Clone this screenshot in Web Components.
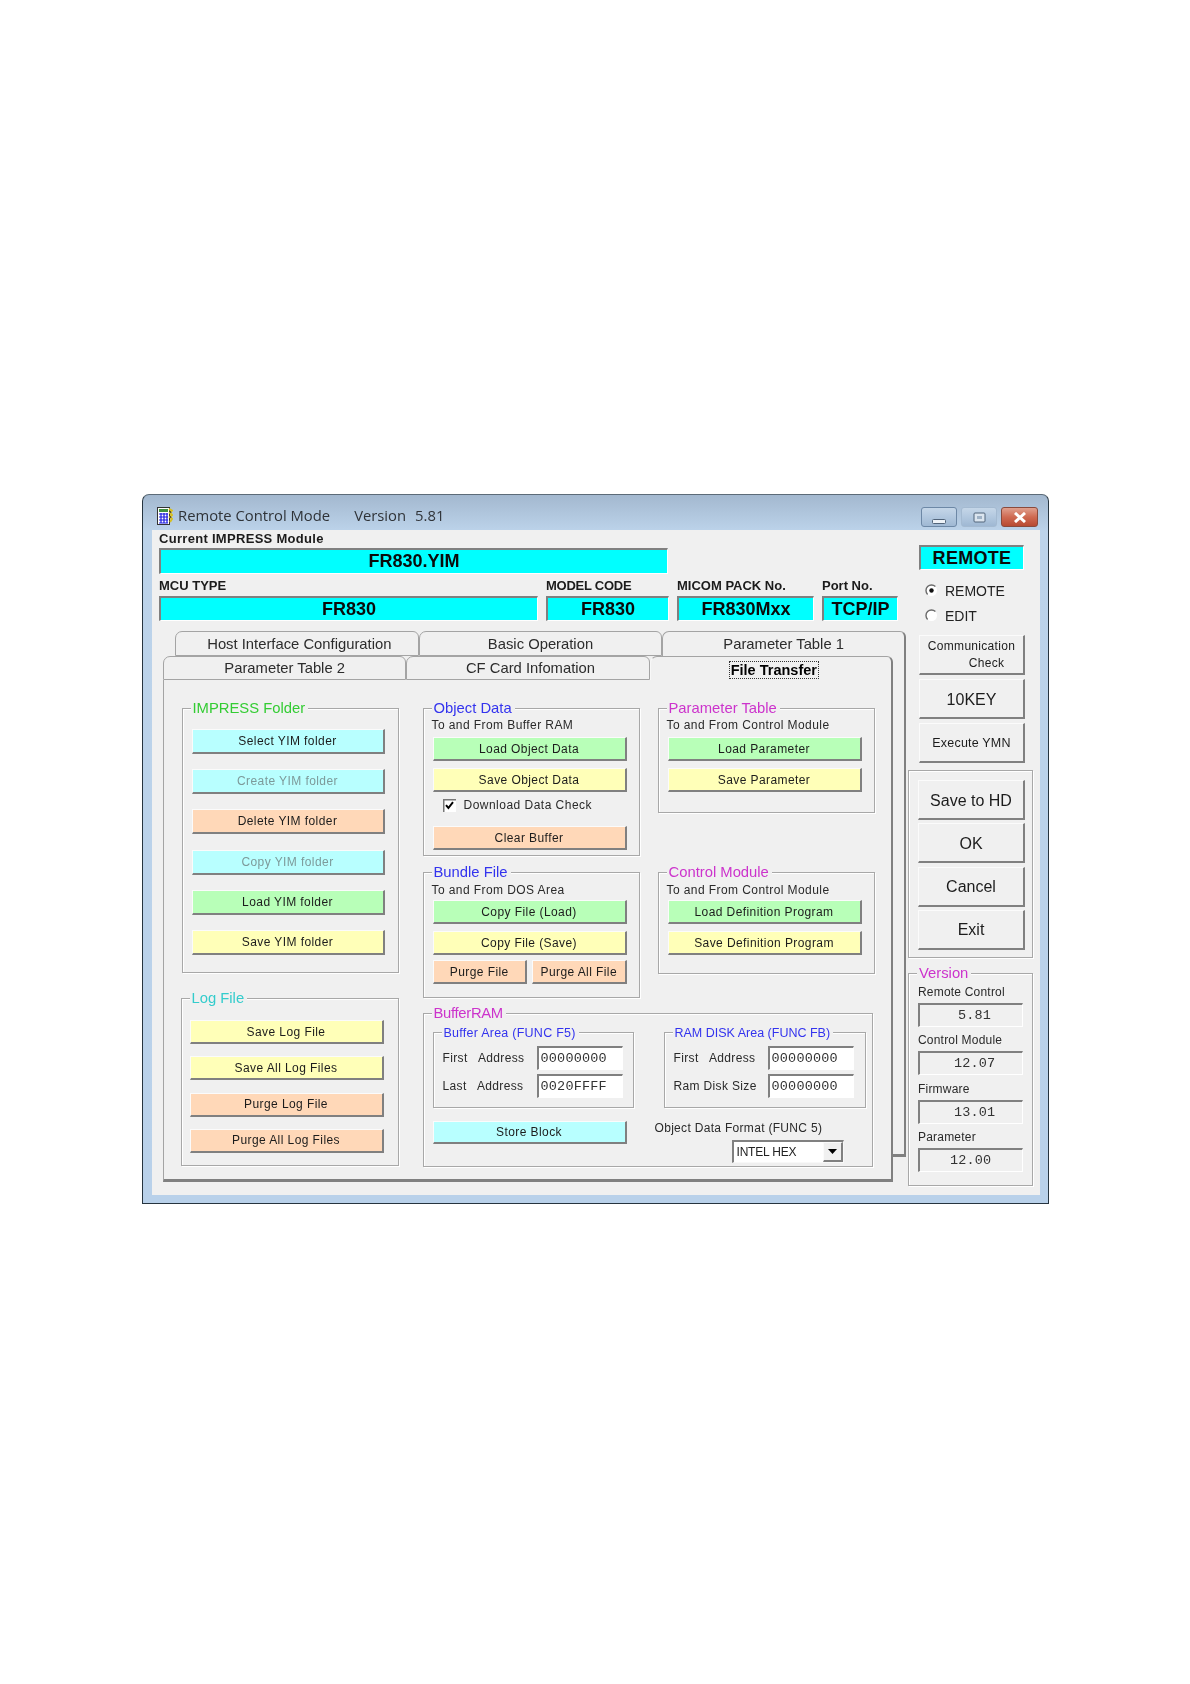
<!DOCTYPE html>
<html lang="en">
<head>
<meta charset="utf-8">
<title>Remote Control Mode</title>
<style>
	html, body {
		margin: 0;
		background: #fff;
	}
	body {
		box-sizing: border-box;
		height: 1684px;
		padding: 494px 0 0 142px;
		overflow: hidden;
		font-family: "Liberation Sans", Arial, sans-serif;
	}
</style>
</head>
<body>
<remote-app></remote-app>
<script>
'use strict'

// raised push button, tone picks the face colour
class RcButton extends HTMLElement {
	static define(tag = 'rc-button') {
		customElements.define(tag, this)
	}

	constructor() {
		super()
		const shadowroot = this.attachShadow({ mode: 'open' })
		shadowroot.innerHTML = `
			<style>
				:host {
					display: flex;
					align-items: center;
					justify-content: center;
					box-sizing: border-box;
					height: 24px;
					padding-top: 1px;
					background: #f0f0f0;
					border-style: solid;
					border-width: 1px 2px 2px 1px;
					border-color: #fbfbfb #808080 #808080 #fbfbfb;
					color: #1c1c1c;
					font-size: 12px;
					letter-spacing: .42px;
					text-align: center;
					line-height: 17px;
				}
				:host([tone="cyan"]) { background: #b8ffff; }
				:host([tone="green"]) { background: #b8ffb8; }
				:host([tone="yellow"]) { background: #ffffb8; }
				:host([tone="orange"]) { background: #ffd8b8; }
				:host([disabled]) { color: #7d9a9a; }
				div { width: 100%; }
			</style>
			<div><slot></slot></div>`
	}
}

// etched frame with a coloured caption sitting on its top line
class RcGroup extends HTMLElement {
	static define(tag = 'rc-group') {
		customElements.define(tag, this)
	}

	constructor() {
		super()
		const shadowroot = this.attachShadow({ mode: 'open' })
		shadowroot.innerHTML = `
			<style>
				:host {
					display: block;
					box-sizing: border-box;
					border: 1px solid #a8a8a8;
					box-shadow: 1px 1px 0 #fff, inset 1px 1px 0 #fff;
				}
				:host([plain]) .title { visibility: hidden; }
				.title {
					width: fit-content;
					height: 16px;
					margin: -9px 0 0 8px;
					padding: 0 3px 0 2px;
					background: #f0f0f0;
					font-size: 14.8px;
					line-height: 16px;
					white-space: nowrap;
				}
			</style>
			<div class="title" part="title"><slot name="title"></slot></div>
			<slot></slot>`
	}
}

// sunken box, cyan for the read outs, white for the inputs
class RcField extends HTMLElement {
	static define(tag = 'rc-field') {
		customElements.define(tag, this)
	}

	constructor() {
		super()
		const shadowroot = this.attachShadow({ mode: 'open' })
		shadowroot.innerHTML = `
			<style>
				:host {
					display: flex;
					align-items: center;
					box-sizing: border-box;
					height: 25px;
					border-style: solid;
					border-width: 2px 1px 1px 2px;
					border-color: #808080 #fff #fff #808080;
					background: #f0f0f0;
					color: #333;
					font-family: "Liberation Mono", monospace;
					font-size: 13.5px;
					white-space: pre;
				}
				:host([tone="cyan"]) {
					justify-content: center;
					background: #00ffff;
					color: #0a0a0a;
					font-family: "Liberation Sans", Arial, sans-serif;
					font-size: 18px;
					font-weight: bold;
				}
				:host([tone="white"]) {
					background: #fff;
					padding-left: 2px;
					letter-spacing: .2px;
				}
			</style>
			<slot></slot>`
	}
}

class RcRadio extends HTMLElement {
	static define(tag = 'rc-radio') {
		customElements.define(tag, this)
	}

	constructor() {
		super()
		const shadowroot = this.attachShadow({ mode: 'open' })
		shadowroot.innerHTML = `
			<style>
				:host {
					display: flex;
					align-items: center;
					gap: 7px;
					height: 25px;
					color: #222;
					font-size: 14px;
				}
				svg { display: block; }
				.dot { display: none; }
				:host([checked]) .dot { display: inline; }
			</style>
			<svg width="13" height="13" viewBox="0 0 13 13">
				<circle cx="6.5" cy="6.5" r="5.5" fill="#fff"/>
				<path d="M2.6 10.4A5.5 5.5 0 0 1 10.4 2.6" fill="none" stroke="#6a6a6a" stroke-width="1.4"/>
				<circle class="dot" cx="6.5" cy="6.5" r="2.2" fill="#111"/>
			</svg>
			<slot></slot>`
	}
}

class RcCheck extends HTMLElement {
	static define(tag = 'rc-check') {
		customElements.define(tag, this)
	}

	constructor() {
		super()
		const shadowroot = this.attachShadow({ mode: 'open' })
		shadowroot.innerHTML = `
			<style>
				:host {
					display: flex;
					align-items: center;
					gap: 8px;
					height: 14px;
					color: #2a2a2a;
					font-size: 12px;
					letter-spacing: .48px;
				}
				svg { display: block; }
			</style>
			<svg width="13" height="13" viewBox="0 0 13 13">
				<rect width="13" height="13" fill="#fff"/>
				<path d="M.75 13V.75H13" fill="none" stroke="#777" stroke-width="1.5"/>
				<path d="M3 6.2 5.4 9 10 3.2" fill="none" stroke="#000" stroke-width="2"/>
			</svg>
			<slot></slot>`
	}
}

class RcCombo extends HTMLElement {
	static define(tag = 'rc-combo') {
		customElements.define(tag, this)
	}

	constructor() {
		super()
		const shadowroot = this.attachShadow({ mode: 'open' })
		shadowroot.innerHTML = `
			<style>
				:host {
					display: flex;
					box-sizing: border-box;
					height: 23px;
					border-style: solid;
					border-width: 2px 1px 1px 2px;
					border-color: #808080 #f8f8f8 #f8f8f8 #808080;
					background: #fff;
					color: #222;
					font-size: 12px;
					letter-spacing: -.2px;
				}
				.text {
					flex: 1;
					display: flex;
					align-items: center;
					padding-left: 3px;
				}
				.arrow {
					display: flex;
					align-items: center;
					justify-content: center;
					box-sizing: border-box;
					width: 20px;
					border-style: solid;
					border-width: 1px 2px 2px 1px;
					border-color: #fbfbfb #808080 #808080 #fbfbfb;
					background: #f0f0f0;
				}
			</style>
			<div class="text"><slot></slot></div>
			<div class="arrow">
				<svg width="9" height="5" viewBox="0 0 9 5"><path d="M0 0H9L4.5 5Z" fill="#000"/></svg>
			</div>`
	}
}

class RcTab extends HTMLElement {
	static define(tag = 'rc-tab') {
		customElements.define(tag, this)
	}

	constructor() {
		super()
		const shadowroot = this.attachShadow({ mode: 'open' })
		shadowroot.innerHTML = `
			<style>
				:host {
					display: flex;
					flex: 0 0 33.333%;
					align-items: center;
					justify-content: center;
					box-sizing: border-box;
					border-style: solid;
					border-width: 1.5px;
					border-color: #a4a4a4;
					border-radius: 7px 6px 0 0;
					background: #f0f0f0;
					color: #2c2c2c;
					font-size: 14.8px;
				}
				:host([back]) {
					border-bottom: 0;
					border-right-width: 2px;
					border-right-color: #808080;
				}
				:host([selected]) {
					border-bottom: 0;
					border-left-color: #f8f8f8;
					border-right-width: 2px;
					border-right-color: #808080;
					color: #000;
					font-weight: bold;
					font-size: 14.5px;
					padding: 2px 0 0 6px;
				}
				:host([selected]) span {
					padding: 0 1px;
					outline: 1px dotted #333;
				}
			</style>
			<span><slot></slot></span>`
	}
}

class RcWindow extends HTMLElement {
	static define(tag = 'rc-window') {
		customElements.define(tag, this)
	}

	constructor() {
		super()
		const shadowroot = this.attachShadow({ mode: 'open' })
		shadowroot.innerHTML = `
			<style>
				:host {
					display: block;
					box-sizing: border-box;
					width: 907px;
					height: 710px;
					border: 1px solid #26343f;
					border-color: #5c6b78 #26343f #26343f #26343f;
					border-radius: 7px 7px 0 0;
					background: linear-gradient(#a3b8cf, #bcd3ea 36px, #b9d1ea);
					filter: blur(.35px);
				}
				.bar {
					display: flex;
					align-items: flex-start;
					box-sizing: border-box;
					height: 35px;
					padding: 12px 10px 0 14px;
				}
				.icon { display: block; margin-right: 5px; }
				.caption {
					flex: 1;
					height: 19px;
					margin-top: -1px;
					color: #2f3338;
					font-family: "Open Sans", sans-serif;
					font-size: 14.8px;
					line-height: 19px;
					white-space: nowrap;
				}
				.caption span { margin-left: 24px; }
				.caption span + span { margin-left: 9px; }
				.controls { display: flex; gap: 4px; }
				.ctl {
					display: flex;
					align-items: center;
					justify-content: center;
					box-sizing: border-box;
					width: 36px;
					height: 20px;
					border: 1px solid #6d88a6;
					border-radius: 3px;
					background: linear-gradient(#c5d6e8, #b2c8df 50%, #9fb8d3);
				}
				.ctl.min { align-items: flex-end; padding-bottom: 1px; }
				.ctl.max { border-color: #a4bad1; }
				.ctl.close {
					width: 37px;
					border-color: #8a4a3c;
					background: linear-gradient(#e0a08e, #cf6a52 50%, #b84a32);
				}
				.client {
					box-sizing: border-box;
					height: 665px;
					margin: 0 8px 0 9px;
					background: #f0f0f0;
				}
			</style>
			<div class="bar">
				<svg class="icon" width="16" height="18" viewBox="0 0 16 18">
					<rect x=".5" y=".5" width="12" height="17" fill="#fff" stroke="#333"/>
					<rect x="2" y="2" width="9" height="3" fill="#3f8f3f"/>
					<path d="M2 7H11M2 10H11M2 13H11M2 16H11M4 6V16.5M7 6V16.5M10 6V16.5" stroke="#1a1ae0" stroke-width="1.2" fill="none"/>
					<path d="M12 2 15 3.5 13 6 15 8 13 10 15 12 13 15" stroke="#d8c020" stroke-width="2" fill="none"/>
					<path d="M13 4 14 6M13 9 14 11" stroke="#333" fill="none"/>
				</svg>
				<div class="caption">Remote Control Mode<span>Version</span><span>5.81</span></div>
				<div class="controls">
					<div class="ctl min">
						<svg width="15" height="7" viewBox="0 0 15 7"><rect x=".5" y="1.5" width="13" height="4" rx="1" fill="#eef3f8" stroke="#51647a"/></svg>
					</div>
					<div class="ctl max">
						<svg width="13" height="11" viewBox="0 0 13 11"><rect x="1" y="1" width="11" height="9" rx="1" fill="#dbe5ef" stroke="#51647a"/><rect x="4" y="4" width="5" height="3" fill="#9fb2c6"/></svg>
					</div>
					<div class="ctl close">
						<svg width="14" height="11" viewBox="0 0 14 11"><path d="M2 1 12 10M12 1 2 10" stroke="#fff" stroke-width="3" fill="none"/></svg>
					</div>
				</div>
			</div>
			<div class="client"><slot></slot></div>`
	}
}

class RemoteApp extends HTMLElement {
	static define(tag = 'remote-app') {
		customElements.define(tag, this)
	}

	constructor() {
		super()
		const shadowroot = this.attachShadow({ mode: 'open' })
		shadowroot.innerHTML = `
			<style>
				:host {
					display: block;
					font-family: "Liberation Sans", Arial, sans-serif;
				}
				.layout {
					display: grid;
					grid-template-columns: 754px 125px;
					column-gap: 2px;
				}
				.main { padding-left: 7px; }
				.side { display: flex; flex-direction: column; }
				.head {
					height: 18px;
					box-sizing: border-box;
					color: #1b1b1b;
					font-size: 13px;
					font-weight: bold;
					line-height: 17px;
				}
				.head.wide { letter-spacing: .3px; }
				.head.tight { letter-spacing: -.25px; }
				.module { width: 509px; height: 26px; }
				.heads {
					display: grid;
					grid-template-columns: 379px 123px 137px 76px;
					column-gap: 8px;
					margin-top: 3px;
				}
				.heads rc-field { height: 25px; margin-top: 1px; }
				.heads .row2 { grid-row: 2; }

				/* tab control: two rows of tabs over the sheet, stub is the sheet behind */
				.tabs {
					display: grid;
					grid-template-columns: 730px 13px;
					grid-template-rows: 25px 24px 477px 25px;
					margin: 10px 0 0 4px;
				}
				.tabrow { display: flex; }
				.tabrow.first { grid-column: 1 / 3; grid-row: 1; padding-left: 12px; }
				.tabrow.second { grid-column: 1; grid-row: 2; }
				.nudge { padding-left: 5px; }
				.stub {
					grid-column: 2;
					grid-row: 2 / 4;
					box-sizing: border-box;
					border-right: 2px solid #808080;
					border-bottom: 3px solid #808080;
				}
				.sheet {
					grid-column: 1;
					grid-row: 3 / 5;
					display: flex;
					gap: 24px;
					box-sizing: border-box;
					padding: 28px 0 0 17.5px;
					border-style: solid;
					border-width: 0 2px 3px 1.5px;
					border-color: #808080 #808080 #808080 #a4a4a4;
				}
				.sheet-left { display: flex; flex-direction: column; width: 217px; }
				.sheet-right {
					display: grid;
					grid-template-columns: 217px 217px;
					grid-template-rows: 164px 141px 154px;
					column-gap: 18px;
				}
				.sheet-right > rc-group { align-self: start; }
				.impress { height: 265px; }
				.logfile { height: 168px; margin: 25px 0 0 -1px; }
				.stack { display: flex; flex-direction: column; }
				.impress .stack { gap: 15.2px; margin: 13px 0 0 9px; width: 193px; }
				.impress rc-button { height: 25px; }
				.logfile .stack { gap: 12.3px; margin: 14px 0 0 8px; width: 194px; }
				.green-t { color: #33cc33; }
				.aqua-t { color: #33cccc; }
				.blue-t { color: #3333ee; }
				.pink-t { color: #cc33cc; }
				.sub {
					height: 14px;
					margin: 2px 0 0 8px;
					color: #2a2a2a;
					font-size: 12px;
					letter-spacing: .42px;
					line-height: 14px;
				}
				.data .stack { margin: 5px 0 0 9px; width: 194px; }
				.data .stack > rc-button + rc-button { margin-top: 7px; }
				.data.bundle .stack, .data.control .stack { margin-top: 3px; }
				.data.bundle .sub, .data.control .sub { margin-top: 3px; }
				.data.object { height: 148px; }
				.data.param { height: 105px; }
				.data.bundle { height: 126px; }
				.data.control { height: 102px; }
				rc-check { margin: 6px 0 14px 10px; }
				.pair { display: flex; gap: 5px; margin-top: 5px; }
				.pair rc-button { flex: 1; }

				.buffer { grid-column: 1 / 3; width: 450px; height: 154px; }
				.buffer > [slot="title"] { letter-spacing: -.3px; }
				.areas { display: flex; gap: 30px; margin: 11px 0 0 9px; }
				.area { width: 201px; height: 76px; }
				.area + .area { width: 202px; }
				.area [slot="title"] { font-size: 12.5px; }
				.area.first [slot="title"] { letter-spacing: .25px; }
				.rows { display: flex; flex-direction: column; gap: 4px; margin: 6px 0 0 9px; }
				.row { display: flex; align-items: center; }
				.row span {
					width: 94px;
					color: #2a2a2a;
					font-size: 12px;
					letter-spacing: .35px;
					white-space: pre;
				}
				.row rc-field { width: 86px; height: 24px; }
				.bottom { display: flex; gap: 28px; margin: 13px 0 0 9px; }
				.bottom > rc-button { width: 194px; height: 23px; }
				.format { color: #2a2a2a; font-size: 12px; line-height: 14px; letter-spacing: .31px; }
				.format rc-combo { width: 112px; margin: 5px 0 0 77px; }

				/* right hand column */
				.state { width: 105px; height: 25px; margin: 15px 0 0 11px; letter-spacing: .3px; }
				.radios { margin: 8px 0 0 17px; }
				.cmds { display: flex; flex-direction: column; gap: 4px; width: 106px; margin: 7px 0 0 11px; }
				.cmds rc-button { height: 40px; }
				.comm { font-size: 12px; line-height: 17px; letter-spacing: .3px; }
				.comm span { display: block; padding-left: 30px; }
				.big { font-size: 16px; letter-spacing: 0; }
				.mid { font-size: 12.5px; letter-spacing: .2px; }
				.exits { height: 188px; margin-top: 7px; }
				.exits .stack { gap: 3.3px; width: 107px; margin: 2px 0 0 9px; }
				.exits rc-button { height: 40px; }
				.version { height: 213px; margin-top: 15px; }
				.version .body { display: flex; flex-direction: column; margin: 4px 0 0 9px; width: 105px; }
				.vlabel {
					height: 15px;
					margin-bottom: 3px;
					color: #2a2a2a;
					font-size: 12px;
					letter-spacing: .2px;
					line-height: 15px;
				}
				.version rc-field { height: 24px; margin-bottom: 6.3px; letter-spacing: .15px; }
			</style>
			<rc-window>
				<div class="layout">
					<div class="main">
						<div class="head wide">Current IMPRESS Module</div>
						<rc-field tone="cyan" class="module">FR830.YIM</rc-field>
						<div class="heads">
							<div class="head">MCU TYPE</div>
							<div class="head tight">MODEL CODE</div>
							<div class="head">MICOM PACK No.</div>
							<div class="head">Port No.</div>
							<rc-field tone="cyan" class="row2">FR830</rc-field>
							<rc-field tone="cyan" class="row2">FR830</rc-field>
							<rc-field tone="cyan" class="row2">FR830Mxx</rc-field>
							<rc-field tone="cyan" class="row2">TCP/IP</rc-field>
						</div>
						<div class="tabs">
							<div class="tabrow first">
								<rc-tab class="nudge">Host Interface Configuration</rc-tab>
								<rc-tab>Basic Operation</rc-tab>
								<rc-tab back>Parameter Table 1</rc-tab>
							</div>
							<div class="tabrow second">
								<rc-tab>Parameter Table 2</rc-tab>
								<rc-tab class="nudge">CF Card Infomation</rc-tab>
								<rc-tab selected>File Transfer</rc-tab>
							</div>
							<div class="stub"></div>
							<div class="sheet">
								<div class="sheet-left">
									<rc-group class="impress">
										<span slot="title" class="green-t">IMPRESS Folder</span>
										<div class="stack">
											<rc-button tone="cyan">Select YIM folder</rc-button>
											<rc-button tone="cyan" disabled>Create YIM folder</rc-button>
											<rc-button tone="orange">Delete YIM folder</rc-button>
											<rc-button tone="cyan" disabled>Copy YIM folder</rc-button>
											<rc-button tone="green">Load YIM folder</rc-button>
											<rc-button tone="yellow">Save YIM folder</rc-button>
										</div>
									</rc-group>
									<rc-group class="logfile">
										<span slot="title" class="aqua-t">Log File</span>
										<div class="stack">
											<rc-button tone="yellow">Save Log File</rc-button>
											<rc-button tone="yellow">Save All Log Files</rc-button>
											<rc-button tone="orange">Purge Log File</rc-button>
											<rc-button tone="orange">Purge All Log Files</rc-button>
										</div>
									</rc-group>
								</div>
								<div class="sheet-right">
									<rc-group class="data object">
										<span slot="title" class="blue-t">Object Data</span>
										<div class="sub">To and From Buffer RAM</div>
										<div class="stack">
											<rc-button tone="green">Load Object Data</rc-button>
											<rc-button tone="yellow">Save Object Data</rc-button>
											<rc-check>Download Data Check</rc-check>
											<rc-button tone="orange">Clear Buffer</rc-button>
										</div>
									</rc-group>
									<rc-group class="data param">
										<span slot="title" class="pink-t">Parameter Table</span>
										<div class="sub">To and From Control Module</div>
										<div class="stack">
											<rc-button tone="green">Load Parameter</rc-button>
											<rc-button tone="yellow">Save Parameter</rc-button>
										</div>
									</rc-group>
									<rc-group class="data bundle">
										<span slot="title" class="blue-t">Bundle File</span>
										<div class="sub">To and From DOS Area</div>
										<div class="stack">
											<rc-button tone="green">Copy File (Load)</rc-button>
											<rc-button tone="yellow">Copy File (Save)</rc-button>
											<div class="pair">
												<rc-button tone="orange">Purge File</rc-button>
												<rc-button tone="orange">Purge All File</rc-button>
											</div>
										</div>
									</rc-group>
									<rc-group class="data control">
										<span slot="title" class="pink-t">Control Module</span>
										<div class="sub">To and From Control Module</div>
										<div class="stack">
											<rc-button tone="green">Load Definition Program</rc-button>
											<rc-button tone="yellow">Save Definition Program</rc-button>
										</div>
									</rc-group>
									<rc-group class="buffer">
										<span slot="title" class="pink-t">BufferRAM</span>
										<div class="areas">
											<rc-group class="area first">
												<span slot="title" class="blue-t">Buffer Area (FUNC F5)</span>
												<div class="rows">
													<div class="row"><span>First   Address</span><rc-field tone="white">00000000</rc-field></div>
													<div class="row"><span>Last   Address</span><rc-field tone="white">0020FFFF</rc-field></div>
												</div>
											</rc-group>
											<rc-group class="area">
												<span slot="title" class="blue-t">RAM DISK Area (FUNC FB)</span>
												<div class="rows">
													<div class="row"><span>First   Address</span><rc-field tone="white">00000000</rc-field></div>
													<div class="row"><span>Ram Disk Size</span><rc-field tone="white">00000000</rc-field></div>
												</div>
											</rc-group>
										</div>
										<div class="bottom">
											<rc-button tone="cyan">Store Block</rc-button>
											<div class="format">
												Object Data Format (FUNC 5)
												<rc-combo>INTEL HEX</rc-combo>
											</div>
										</div>
									</rc-group>
								</div>
							</div>
						</div>
					</div>
					<div class="side">
						<rc-field tone="cyan" class="state">REMOTE</rc-field>
						<div class="radios">
							<rc-radio checked>REMOTE</rc-radio>
							<rc-radio>EDIT</rc-radio>
						</div>
						<div class="cmds">
							<rc-button class="comm">Communication<span>Check</span></rc-button>
							<rc-button class="big">10KEY</rc-button>
							<rc-button class="mid">Execute YMN</rc-button>
						</div>
						<rc-group class="exits" plain>
							<div class="stack">
								<rc-button class="big">Save to HD</rc-button>
								<rc-button class="big">OK</rc-button>
								<rc-button class="big">Cancel</rc-button>
								<rc-button class="big">Exit</rc-button>
							</div>
						</rc-group>
						<rc-group class="version">
							<span slot="title" class="pink-t">Version</span>
							<div class="body">
								<div class="vlabel">Remote Control</div>
								<rc-field style="padding-left:38px">5.81</rc-field>
								<div class="vlabel">Control Module</div>
								<rc-field style="padding-left:34px">12.07</rc-field>
								<div class="vlabel">Firmware</div>
								<rc-field style="padding-left:34px">13.01</rc-field>
								<div class="vlabel">Parameter</div>
								<rc-field style="padding-left:30px">12.00</rc-field>
							</div>
						</rc-group>
					</div>
				</div>
			</rc-window>`
	}
}

RcButton.define()
RcGroup.define()
RcField.define()
RcRadio.define()
RcCheck.define()
RcCombo.define()
RcTab.define()
RcWindow.define()
RemoteApp.define()
</script>
</body>
</html>
